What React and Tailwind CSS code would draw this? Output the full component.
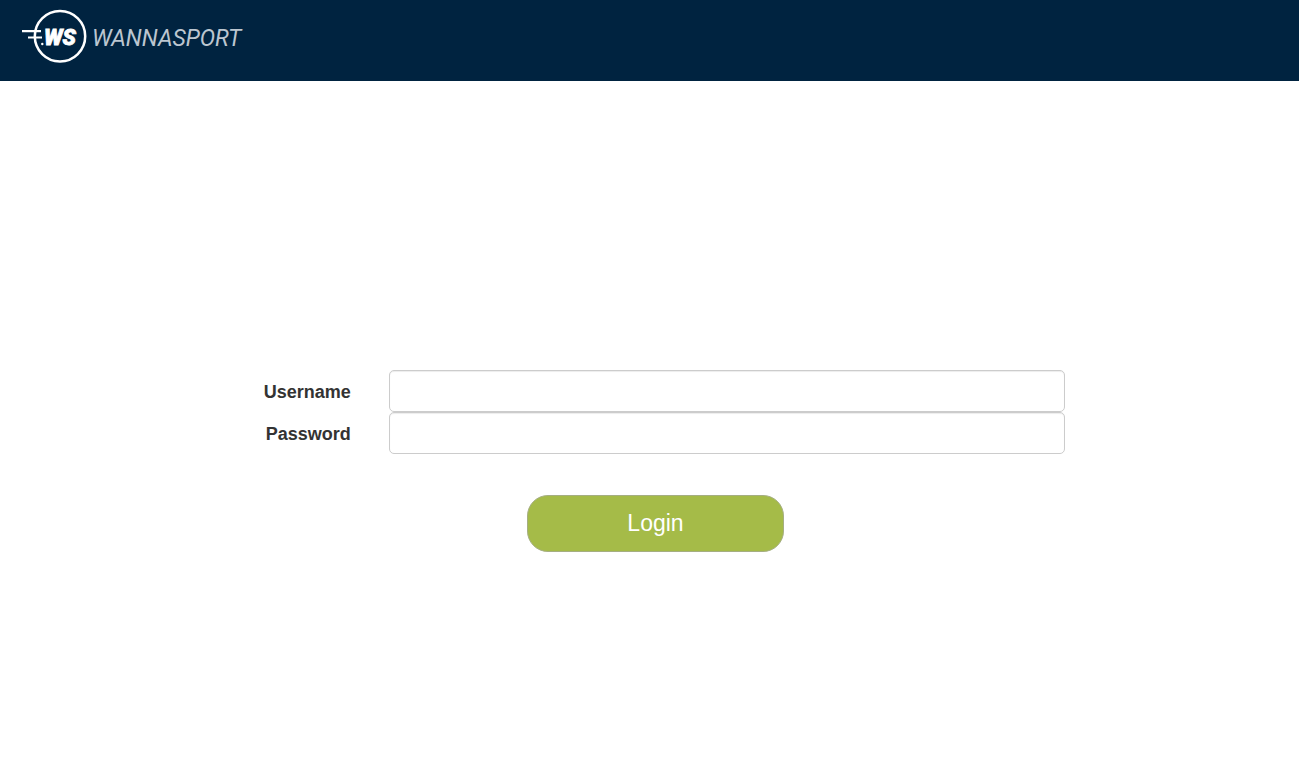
function Logo() {
  return (
    <svg
      className="h-[81px] w-64"
      viewBox="0 0 256 81"
      fill="none"
      role="img"
      aria-label="Wannasport"
    >
      <circle cx="60" cy="36.3" r="25.2" stroke="#fff" strokeWidth="2.5" />
      <path d="M22 31.2H41M28 37.5H42" stroke="#fff" strokeWidth="2.2" />
      <circle cx="42.3" cy="44" r="1.2" fill="#fff" />
      <text
        x="44"
        y="45"
        fill="#fff"
        stroke="#fff"
        strokeWidth="0.8"
        className="font-['Roboto',sans-serif] text-[22px] font-black italic"
      >
        WS
      </text>
      <text
        x="92"
        y="46"
        fill="#bcc6d0"
        className="font-['Roboto',sans-serif] text-[23px] font-normal italic"
      >
        WANNASPORT
      </text>
    </svg>
  );
}

function Field({ id, label, type, autoComplete }) {
  return (
    <div className="flex items-center">
      <label
        htmlFor={id}
        className="w-[117px] shrink-0 pt-0.5 text-right text-lg leading-6 font-bold text-[#333]"
      >
        {label}
      </label>
      <input
        id={id}
        name={id}
        type={type}
        autoComplete={autoComplete}
        className="ml-[38px] h-[42px] min-w-0 flex-1 rounded-[5px] border border-[#ccc] bg-white px-3 text-lg text-[#555] shadow-[inset_0_1px_1px_rgba(0,0,0,0.075)] outline-none focus:border-[#66afe9]"
      />
    </div>
  );
}

export default function App() {
  return (
    <div className="min-h-screen bg-white font-['Liberation_Sans',Arial,sans-serif]">
      <header className="flex bg-[#002340]">
        <Logo />
      </header>
      <main className="mx-auto w-[64%] pt-[289px]">
        <form onSubmit={(event) => event.preventDefault()}>
          <Field id="username" label="Username" type="text" autoComplete="username" />
          <Field
            id="password"
            label="Password"
            type="password"
            autoComplete="current-password"
          />
          <div className="mt-[41px] flex justify-center pl-3">
            <button
              type="submit"
              className="h-[57px] w-[257px] cursor-pointer rounded-[21px] border border-[#a5ae82] bg-[#a5bb48] text-[23px] text-white"
            >
              Login
            </button>
          </div>
        </form>
      </main>
    </div>
  );
}
